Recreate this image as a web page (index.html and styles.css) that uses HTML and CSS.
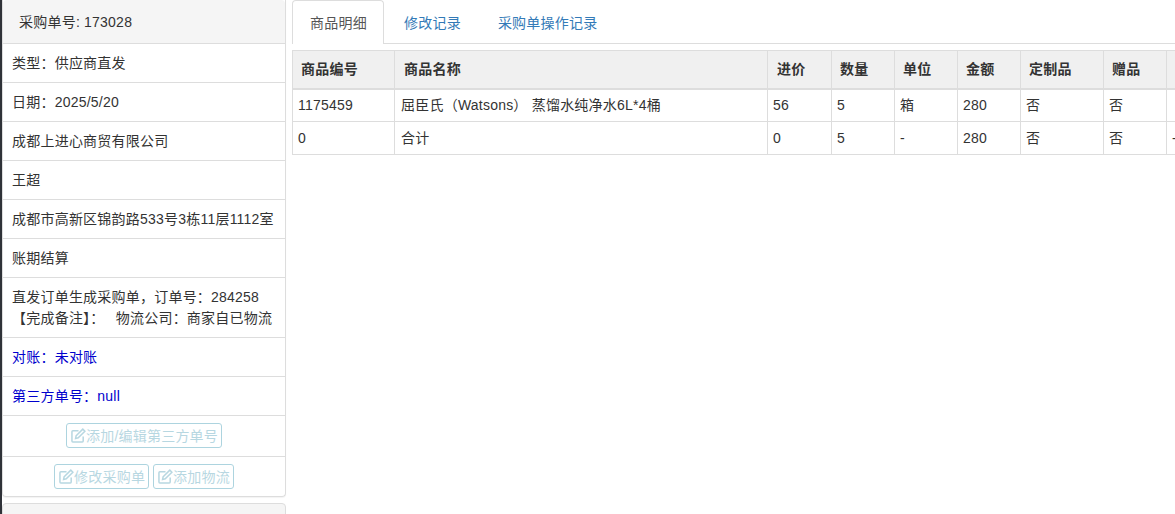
FILE: index.html
```html
<!DOCTYPE html>
<html lang="zh-CN">
<head>
<meta charset="utf-8">
<title>采购单</title>
<link rel="stylesheet" href="styles.css">
</head>
<body>
<svg class="defs" width="0" height="0" aria-hidden="true">
  <symbol id="edit" viewBox="0 0 16 16">
    <path d="M13 9v4.8a1 1 0 0 1-1 1H2a1 1 0 0 1-1-1V4a1 1 0 0 1 1-1h6" fill="none" stroke="currentColor" stroke-width="1.6"/>
    <path d="M5.5 8.2L12.6 1.2l2.2 2.2-7.1 7.1-2.8.6z" fill="none" stroke="currentColor" stroke-width="1.6"/>
  </symbol>
</svg>
<div class="page">
  <aside class="side">
    <div class="panel">
      <div class="panel-head">采购单号: 173028</div>
      <div class="item">类型：供应商直发</div>
      <div class="item">日期：2025/5/20</div>
      <div class="item">成都上进心商贸有限公司</div>
      <div class="item">王超</div>
      <div class="item">成都市高新区锦韵路533号3栋11层1112室</div>
      <div class="item">账期结算</div>
      <div class="item two">直发订单生成采购单，订单号：284258<br>【完成备注】：&nbsp; 物流公司：商家自已物流</div>
      <div class="item blue">对账：未对账</div>
      <div class="item blue">第三方单号：null</div>
      <div class="item actions"><button class="btn" disabled><svg class="ico"><use href="#edit"/></svg>添加/编辑第三方单号</button></div>
      <div class="item actions last"><button class="btn" disabled><svg class="ico"><use href="#edit"/></svg>修改采购单</button><button class="btn" disabled><svg class="ico"><use href="#edit"/></svg>添加物流</button></div>
    </div>
    <div class="panel-next"></div>
  </aside>
  <main class="main">
    <nav class="tabs">
      <a class="tab active">商品明细</a>
      <a class="tab">修改记录</a>
      <a class="tab">采购单操作记录</a>
    </nav>
    <table class="grid">
      <colgroup>
        <col class="c-code"><col class="c-name"><col class="c-price"><col class="c-num"><col class="c-num"><col class="c-num"><col class="c-custom"><col class="c-num"><col class="c-num">
      </colgroup>
      <thead>
        <tr><th>商品编号</th><th>商品名称</th><th>进价</th><th>数量</th><th>单位</th><th>金额</th><th>定制品</th><th>赠品</th><th></th></tr>
      </thead>
      <tbody>
        <tr><td>1175459</td><td>屈臣氏（Watsons） 蒸馏水纯净水6L*4桶</td><td>56</td><td>5</td><td>箱</td><td>280</td><td>否</td><td>否</td><td></td></tr>
        <tr><td>0</td><td>合计</td><td>0</td><td>5</td><td>-</td><td>280</td><td>否</td><td>否</td><td>-</td></tr>
      </tbody>
    </table>
  </main>
</div>
</body>
</html>
```
FILE: styles.css
```css
* { box-sizing: border-box; }
html, body { height: 100%; }
body {
  margin: 0;
  overflow: hidden;
  background: #fff;
  color: #333;
  font: 14px/20px "Liberation Sans", "Noto Sans CJK SC", sans-serif;
  letter-spacing: .22px;
  border-left: 2px solid #2f3238;
}
.defs { position: absolute; }
.page { display: flex; align-items: flex-start; gap: 6px; }
.side { width: 284px; flex: none; }
.panel {
  border: 1px solid #ddd;
  border-top: 0;
  border-radius: 0 0 4px 4px;
  box-shadow: 0 1px 1px rgba(0,0,0,.05);
}
.panel-head {
  height: 44px;
  padding: 12px 16px 0;
  background: #f5f5f5;
  border-bottom: 1px solid #ddd;
  border-radius: 4px 4px 0 0;
}
.item {
  padding: 9px;
  border-bottom: 1px solid #ddd;
  white-space: nowrap;
}
.two { line-height: 21px; padding-bottom: 8px; word-spacing: 1.5px; }
.blue { color: #0000cd; }
.actions {
  display: flex;
  justify-content: center;
  gap: 4px;
  padding: 7px 0;
  height: 41px;
}
.last { border-bottom: 0; height: 39px; }
.btn {
  display: inline-flex;
  align-items: center;
  height: 25px;
  padding: 0 3px 0 4px;
  margin: 0;
  font: inherit;
  letter-spacing: inherit;
  color: #71b1c5;
  background: #fff;
  border: 1px solid #5dabc1;
  border-radius: 3px;
  opacity: .5;
}
.ico { width: 15px; height: 15px; }
.panel-next {
  height: 40px;
  margin-top: 6px;
  background: #f5f5f5;
  border: 1px solid #ddd;
  border-radius: 4px 4px 0 0;
}
.main { flex: 1; min-width: 0; overflow: hidden; }
.tabs {
  display: flex;
  height: 44px;
  border-bottom: 1px solid #ddd;
}
.tab {
  height: 44px;
  padding: 12px 18px 0 17px;
  color: #337ab7;
  border: 1px solid transparent;
  border-bottom: 0;
}
.active {
  width: 92px;
  margin-right: 2px;
  padding: 12px 16px 0 17px;
  color: #555;
  background: #fff;
  border-color: #ddd;
  border-radius: 4px 4px 0 0;
}
.grid {
  width: 883px;
  margin-top: 6px;
  table-layout: fixed;
  border-collapse: collapse;
  white-space: nowrap;
}
.c-code { width: 102px; }
.c-name { width: 373px; }
.c-price { width: 64px; }
.c-num { width: 63px; }
.c-custom { width: 83px; }
.grid th, .grid td { border: 1px solid #ddd; overflow: hidden; }
.grid th {
  height: 38px;
  padding: 0 8px;
  text-align: left;
  background: #f0f0f0;
  border-bottom-width: 2px;
}
.grid th:nth-child(2), .grid th:nth-child(3) { padding-left: 9px; }
.grid td { height: 33px; padding: 0 5px; }
.grid td:nth-child(2) { padding-left: 6px; }
```
